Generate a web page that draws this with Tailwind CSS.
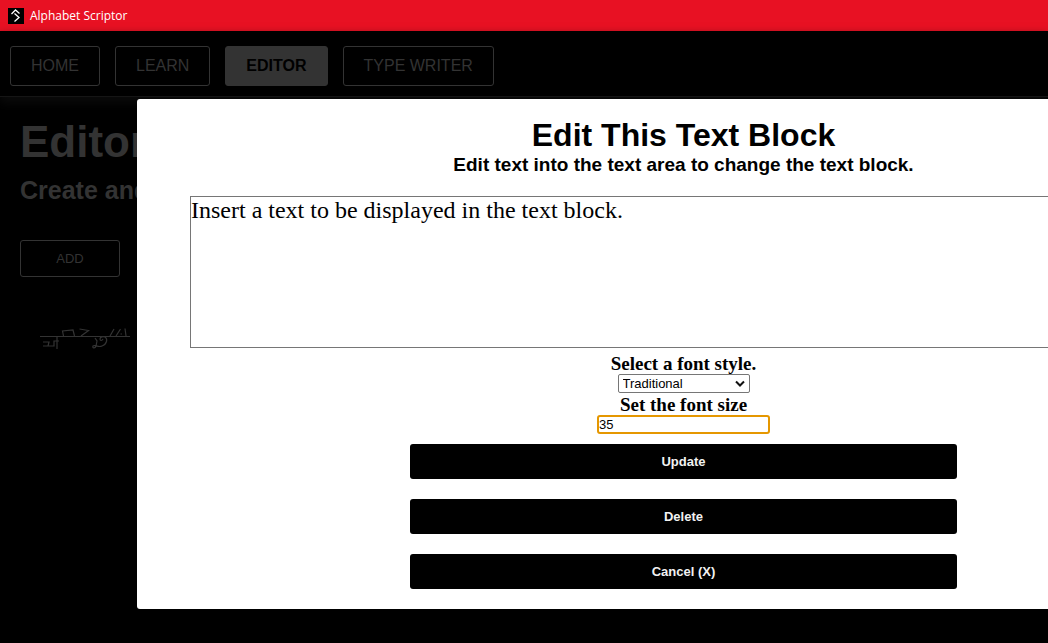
<!DOCTYPE html>
<html lang="en">
<head>
<meta charset="utf-8">
<meta name="viewport" content="width=device-width, initial-scale=1">
<title>Alphabet Scriptor</title>
<script src="https://cdn.jsdelivr.net/npm/@tailwindcss/browser@4"></script>
</head>
<body class="relative flex min-h-screen flex-col overflow-hidden bg-black font-['Liberation_Sans',Arial,sans-serif] text-[#333333]">
<div class="flex h-[31px] items-center gap-1.5 bg-[#e81123] pl-2 text-white">
  <svg class="size-4" viewBox="0 0 16 16" fill="none" aria-hidden="true">
    <path fill="#000" d="M0 0h16v16H0z"/>
    <path stroke="#fff" stroke-width="1.3" d="M3.500 6 7.500 2l4 3.500M6.500 5.500 11 9.500 6.500 13.500"/>
  </svg>
  <span class="font-['Open_Sans','Noto_Sans',sans-serif] text-xs">Alphabet Scriptor</span>
</div>
<nav class="flex gap-[15px] border-b border-[#151515] px-2.5 pt-[15px] pb-2.5 shadow-[0_6px_10px_#0b0b0b]">
  <button type="button" class="h-10 rounded-[3px] border border-[#333333] px-5 text-base">HOME</button>
  <button type="button" class="h-10 rounded-[3px] border border-[#333333] px-5 text-base">LEARN</button>
  <button type="button" class="h-10 rounded-[3px] border border-[#333333] bg-[#333333] px-5 text-base font-bold text-black">EDITOR</button>
  <button type="button" class="h-10 rounded-[3px] border border-[#333333] px-5 text-base">TYPE WRITER</button>
</nav>
<main class="flex flex-col items-start px-5 pt-5">
  <h1 class="text-[44px] leading-[50px] font-bold">Editor</h1>
  <h2 class="mt-2 text-[25px] leading-[30px] font-bold">Create and edit</h2>
  <button type="button" class="mt-[35px] h-[37px] w-[100px] rounded-[3px] border border-[#333333] text-[13px]">ADD</button>
  <svg class="mt-[43px] ml-5 h-[32px] w-[90px]" viewBox="0 0 90 32" fill="none" stroke="#333" stroke-width="1.2" aria-hidden="true">
    <path stroke-width="1" d="M0 16.500H90"/>
    <path d="M3 22h6l-1 4M3 26h11v-5h5M17 17v12M23.500 16l-1-5 10.500-1 1.500 6M39.500 9l9 1.500-7.500 5.500M55 18l2 3-1 5c-1 3-4 2-3 0 2-2 5 2 9 0 5-2 6-7 3-9-2-1-5 0-5 2s2 2 3 0M70 16l4-7M76 16l4.500-7M80.500 14h1.500M85 8.500l1 7.500"/>
  </svg>
</main>
<section role="dialog" aria-labelledby="dialog-title" class="absolute top-[99px] left-[137px] w-[1093px] rounded-[3px] bg-white px-[53px] pt-[18px] pb-5 text-black">
  <form class="flex flex-col items-center">
    <h2 id="dialog-title" class="text-[32px] leading-[37px] font-bold">Edit This Text Block</h2>
    <h3 class="text-[19px] leading-[22px] font-bold">Edit text into the text area to change the text block.</h3>
    <textarea aria-label="Text block content" class="mt-5 h-[152px] w-full resize-none border border-[#767676] font-['Liberation_Serif','Times_New_Roman',serif] text-2xl leading-[27px] outline-none">Insert a text to be displayed in the text block.</textarea>
    <label for="font-style" class="mt-[5px] font-['Liberation_Serif','Times_New_Roman',serif] text-[19px] leading-[21px] font-bold">Select a font style.</label>
    <div class="relative flex">
      <select id="font-style" class="h-[19px] w-[132px] appearance-none rounded-[2px] border border-[#767676] bg-white pl-1 text-[13px] leading-4"><option>Traditional</option></select>
      <svg class="pointer-events-none absolute top-[6px] right-[5px] h-[7px] w-[10px]" viewBox="0 0 10 7" fill="none" stroke="#111" stroke-width="2" aria-hidden="true"><path d="m1 1.500 4 4 4-4"/></svg>
    </div>
    <label for="font-size" class="mt-px font-['Liberation_Serif','Times_New_Roman',serif] text-[19px] leading-[21px] font-bold">Set the font size</label>
    <input id="font-size" type="text" value="35" class="h-[19px] w-[173px] rounded-[3px] border-2 border-[#e59700] text-[13px] leading-4 outline-none">
    <div class="mt-2.5 flex w-[547px] flex-col gap-5 text-[13px] font-bold text-[#f2f2f2]">
      <button type="button" class="h-[35px] rounded-[3px] bg-black">Update</button>
      <button type="button" class="h-[35px] rounded-[3px] bg-black">Delete</button>
      <button type="button" class="h-[35px] rounded-[3px] bg-black">Cancel (X)</button>
    </div>
  </form>
</section>
</body>
</html>
